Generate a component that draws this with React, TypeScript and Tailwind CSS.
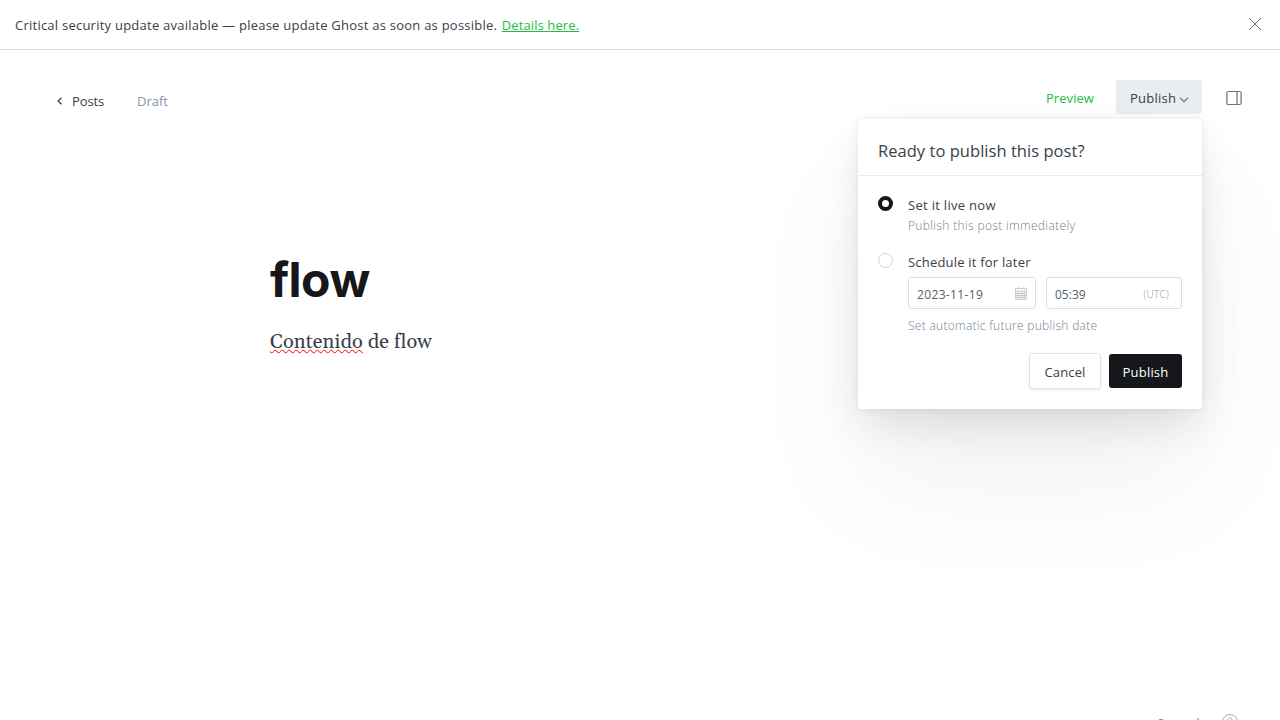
import React from "react";

function CalendarIcon() {
  return (
    <svg className="h-[14px] w-[12px]" viewBox="0 0 12 14" fill="none" stroke="#bcc4cb" strokeWidth="0.8">
      <path d="M.5 2.5h11v11H.5zM.5 5h11M2.500 5v8M4.700 5v8M7 5v8M9.300 5v8M1 7.500h10M1 9.500h10M1 11.500h10M3 .5v3M9 .5v3" />
    </svg>
  );
}

export default function App() {
  return (
    <div className="relative flex h-[720px] w-full flex-col overflow-hidden bg-white font-['Open_Sans','Noto_Sans',sans-serif] text-[13px] font-[370] text-[#394047]">
      <div className="flex h-[50px] shrink-0 items-center justify-between border-b border-[#dddedf] pr-[19px] pl-[15px]">
        <p className="mt-[2px] whitespace-nowrap tracking-[0.24px]">
          Critical security update available — please update Ghost as soon as possible.{" "}
          <a className="ml-px tracking-[0.1px] text-[#26bd3b] underline" href="#details">Details here.</a>
        </p>
        <button aria-label="Close" className="-mt-[2px]">
          <svg className="h-3 w-3" viewBox="0 0 12 12" stroke="#5c6268" strokeWidth="0.9"><path d="M0 0l12 12M12 0L0 12" /></svg>
        </button>
      </div>

      <header className="flex h-[64px] shrink-0 items-end justify-between pr-[38px] pl-[56px]">
        <div className="flex h-[26px] items-center">
          <svg className="-mt-px h-[8px] w-[7px]" viewBox="0 0 7 8" fill="none" stroke="#394047" strokeWidth="1.2"><path d="M5.500 .8L2 4L5.500 7.200" /></svg>
          <span className="mt-[2px] ml-[9px] w-[32px] tracking-[-0.1px]">Posts</span>
          <span className="mt-[2px] ml-[33px] text-[#8496a9]">Draft</span>
        </div>
        <div className="relative flex h-[34px] items-center">
          <span className="mt-[3px] w-[48px] tracking-[0.05px] text-[#26bd3b]">Preview</span>
          <button className="ml-[22px] flex h-[34px] w-[86px] items-center rounded-[3px] bg-[#e9edf0] pl-[14px]">
            <span className="mt-[3px] w-[46px] text-left tracking-[0.25px]">Publish</span>
            <svg className="mt-[5px] ml-[3px] h-[6px] w-[10px]" viewBox="0 0 10 6" fill="none" stroke="#7c858d" strokeWidth="1.4"><path d="M1 .8l4 4l4-4" /></svg>
          </button>
          <svg className="mt-[2px] ml-[24px] h-[16px] w-[16px]" viewBox="0 0 16 16" fill="none" stroke="#69727a" strokeWidth="1.2"><rect x=".9" y="1.500" width="14.200" height="13" rx="1.500" /><path d="M11 1.500v13" /></svg>

          <section className="absolute top-[39px] right-[40px] h-[290px] w-[344px] rounded-[3px] bg-white shadow-[0_0_7px_rgba(0,0,0,0.08),0_18px_40px_-4px_rgba(0,0,0,0.11),0_75px_125px_rgba(0,0,0,0.055)]">
            <h2 className="flex h-[57px] items-center border-b border-[#e9ebed] px-5 pt-[9px] text-[16.5px] tracking-[0.04px]">Ready to publish this post?</h2>
            <div className="px-5">
              <div className="flex pt-[20px]">
                <span className="h-[15px] w-[15px] rounded-full border-[4px] border-[#15171a]" />
                <div className="ml-[15px]">
                  <p className="-mt-px h-[21px] leading-[20px] tracking-[0.3px]">Set it live now</p>
                  <p className="h-[20px] text-[12px] leading-[20px] font-light tracking-[0.34px] text-[#6f8193]">Publish this post immediately</p>
                </div>
              </div>
              <div className="flex pt-[17px]">
                <span className="h-[15px] w-[15px] rounded-full border border-[#ced4d9]" />
                <div className="ml-[15px]">
                  <p className="-mt-px h-[25px] leading-[20px] tracking-[0.2px]">Schedule it for later</p>
                  <div className="flex gap-[10px]">
                    <div className="flex h-[32px] w-[128px] items-center justify-between rounded-[3px] border border-[#dddedf] pr-[8px] pl-[8px] text-[12px] text-[#54606c]">
                      <span className="mt-[3px] tracking-[0.35px]">2023-11-19</span><CalendarIcon />
                    </div>
                    <div className="flex h-[32px] w-[136px] items-center justify-between rounded-[3px] border border-[#dddedf] pr-[12px] pl-[8px] text-[12px] text-[#54606c]">
                      <span className="mt-[3px]">05:39</span>
                      <span className="mt-[2px] text-[10px] font-light tracking-[0.3px] text-[#8496a9]">(UTC)</span>
                    </div>
                  </div>
                  <p className="mt-[7px] h-[19px] text-[12px] leading-[20px] font-light tracking-[0.28px] text-[#6f8193]">Set automatic future publish date</p>
                </div>
              </div>
              <div className="mt-[18px] flex items-center justify-end gap-2">
                <button className="h-[36px] w-[72px] rounded-[3px] border border-[#dfe3e7] pt-[3px] tracking-[0.15px] shadow-[0_1px_2px_rgba(0,0,0,0.08)]">Cancel</button>
                <button className="h-[34px] w-[73px] rounded-[3px] bg-[#15171a] pt-[3px] tracking-[0.2px] text-white">Publish</button>
              </div>
            </div>
          </section>
        </div>
      </header>

      <main className="pt-[136px] pl-[270px]">
        <h1 className="h-[60px] font-[Inter,sans-serif] text-[48px] leading-[60px] font-bold tracking-[-0.5px] text-[#15171a]">flow</h1>
        <p className="mt-[18px] font-[Georgia,Gelasio,'Liberation_Serif',serif] text-[20px] leading-[28px] font-normal tracking-[0.1px]">
          <span className="underline decoration-[#f00] decoration-wavy decoration-1">Contenido</span> de flow
        </p>
      </main>

      <footer className="absolute top-[714px] right-[42px] flex items-start text-[13px] leading-[20px] text-[#7c8b9a]">
        <span className="-mt-px mr-[16px]">3 words</span>
        <svg className="h-4 w-4" viewBox="0 0 16 16" fill="none" stroke="#a5afbb"><circle cx="8" cy="8" r="7.500" /><path d="M6 6c0-3 4-3 4 0c0 1.500-2 1.500-2 3.500M8 11v1" /></svg>
      </footer>
    </div>
  );
}
